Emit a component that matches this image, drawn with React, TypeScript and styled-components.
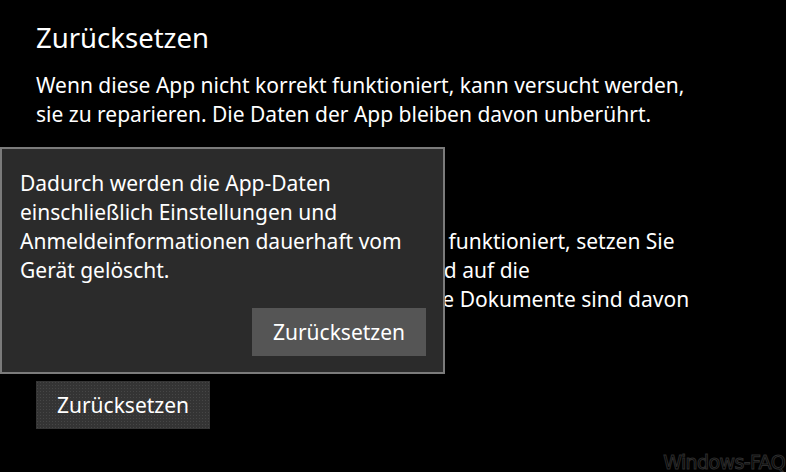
import React from "react";
import styled, { createGlobalStyle } from "styled-components";

const Global = createGlobalStyle`
  html, body { margin: 0; padding: 0; background: #000; }
  body { width: 786px; height: 472px; overflow: hidden; font-family: "Noto Sans", "Open Sans", sans-serif; color: #fff; }
`;

const Page = styled.div`
  position: relative;
  width: 786px;
  height: 472px;
  box-sizing: border-box;
  padding: 20px 0 0 36px;
  display: flex;
  flex-direction: column;
  align-items: flex-start;
  background: #000;
  overflow: hidden;
`;

const Title = styled.h1`
  margin: 0;
  font-size: 27.5px;
  line-height: 36px;
  font-weight: 400;
`;

const Paragraph = styled.p<{ $top: number }>`
  margin: ${(p) => p.$top}px 0 0 0;
  font-size: 21px;
  line-height: 29px;
  white-space: nowrap;
`;

const Button = styled.button<{ $tone: string; $top: number; $grain?: boolean }>`
  margin-top: ${(p) => p.$top}px;
  width: 174px;
  height: 48px;
  border: none;
  padding: 0;
  background-color: ${(p) => p.$tone};
  background-image: ${(p) =>
    p.$grain
      ? "radial-gradient(rgba(255,255,255,0.09) 0.6px, transparent 0.8px)"
      : "none"};
  background-size: 3px 3px;
  color: #fff;
  font-family: inherit;
  font-size: 21px;
  display: flex;
  align-items: center;
  justify-content: center;
`;

const Dialog = styled.div`
  position: absolute;
  left: 0;
  top: 147px;
  width: 445px;
  height: 227px;
  box-sizing: border-box;
  border: 2px solid #7b7b7b;
  background: #2b2b2b;
  padding: 20px 17px 16px 18px;
  display: flex;
  flex-direction: column;
  justify-content: space-between;
`;

const DialogText = styled.p`
  margin: 0;
  font-size: 21px;
  line-height: 29px;
  white-space: nowrap;
`;

const DialogActions = styled.div`
  display: flex;
  justify-content: flex-end;
`;

const Watermark = styled.div`
  position: absolute;
  right: 1px;
  bottom: 0;
  font-family: "DejaVu Sans", sans-serif;
  font-size: 19px;
  line-height: 20px;
  color: transparent;
  -webkit-text-stroke: 1px #2c2c2c;
  letter-spacing: -0.6px;
`;

export default function App() {
  return (
    <>
      <Global />
      <Page>
        <Title>Zurücksetzen</Title>
        <Paragraph $top={15}>
          Wenn diese App nicht korrekt funktioniert, kann versucht werden,
          <br />
          sie zu reparieren. Die Daten der App bleiben davon unberührt.
        </Paragraph>
        <Button $tone="#333333" $top={24}>Reparieren</Button>
        <Paragraph $top={26}>
          Wenn diese App immer noch nicht richtig funktioniert, setzen Sie
          <br />
          sie zurück. Die App wird neu installiert und auf die
          <br />
          Standardeinstellungen zurückgesetzt. Ihre Dokumente sind davon
          <br />
          nicht betroffen.
        </Paragraph>
        <Button $tone="#343434" $top={38} $grain>
          Zurücksetzen
        </Button>
        <Dialog>
          <DialogText>
            Dadurch werden die App-Daten
            <br />
            einschließlich Einstellungen und
            <br />
            Anmeldeinformationen dauerhaft vom
            <br />
            Gerät gelöscht.
          </DialogText>
          <DialogActions>
            <Button $tone="#555555" $top={0}>Zurücksetzen</Button>
          </DialogActions>
        </Dialog>
        <Watermark>Windows-FAQ</Watermark>
      </Page>
    </>
  );
}
